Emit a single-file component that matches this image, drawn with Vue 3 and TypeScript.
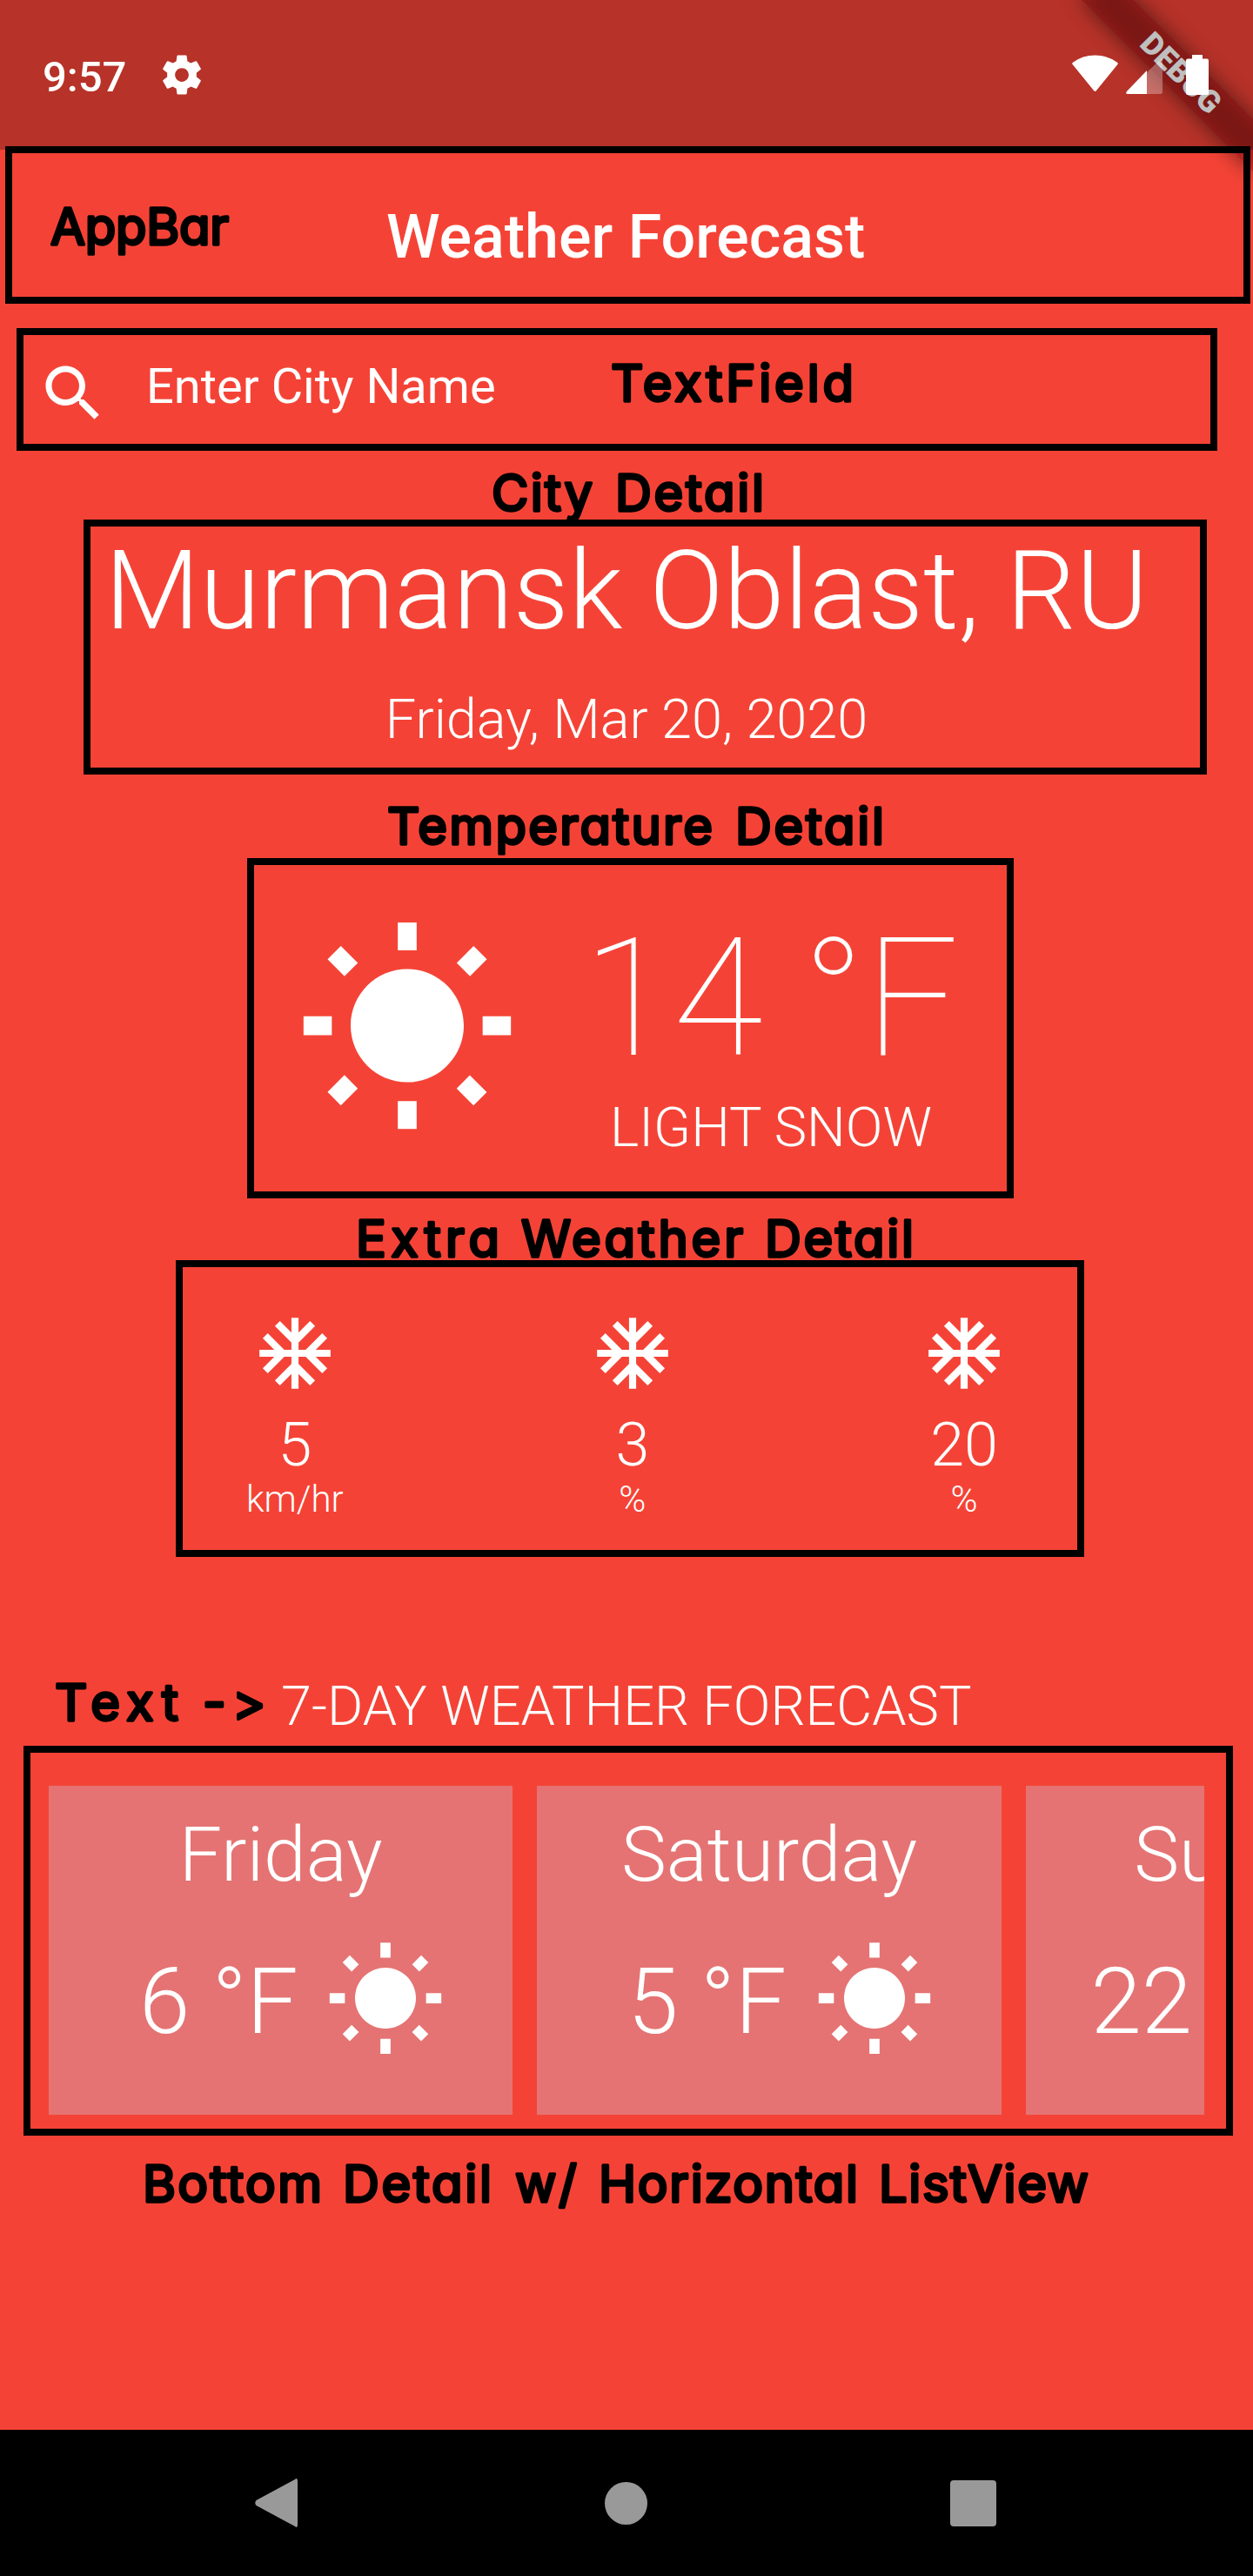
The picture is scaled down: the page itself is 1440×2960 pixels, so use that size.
<script setup lang="ts">
import { h } from 'vue'

interface Word {
  text: string
  x: number
  w: number
}
interface Reading {
  value: string
  unit: string
}
interface Day {
  name: string
  temp: string
}

const BASELINE = 46

// Hand-lettered label: every word is fitted to its own span.
const Note = (props: { words: Word[]; width: number; height: number }) =>
  h(
    'svg',
    { class: 'note', width: props.width, height: props.height },
    props.words.map((word) =>
      h('text', { x: word.x, y: BASELINE, textLength: word.w, lengthAdjust: 'spacing' }, word.text),
    ),
  )
Note.props = ['words', 'width', 'height']

const appBarNote: Word[] = [{ text: 'AppBar', x: 44, w: 205 }]
const fieldNote: Word[] = [{ text: 'TextField', x: 121, w: 279 }]
const cityNote: Word[] = [
  { text: 'City', x: 565, w: 116 },
  { text: 'Detail', x: 707, w: 171 },
]
const temperatureNote: Word[] = [
  { text: 'Temperature', x: 445, w: 374 },
  { text: 'Detail', x: 845, w: 171 },
]
const extraNote: Word[] = [
  { text: 'Extra', x: 409, w: 165 },
  { text: 'Weather', x: 599, w: 255 },
  { text: 'Detail', x: 879, w: 171 },
]
const textNote: Word[] = [
  { text: 'Text', x: 63, w: 142 },
  { text: '-', x: 233, w: 29 },
  { text: '>', x: 267, w: 36 },
]
const bottomNote: Word[] = [
  { text: 'Bottom', x: 164, w: 206 },
  { text: 'Detail', x: 394, w: 171 },
  { text: 'w/', x: 592, w: 71 },
  { text: 'Horizontal', x: 688, w: 298 },
  { text: 'ListView', x: 1010, w: 241 },
]

const readings: Reading[] = [
  { value: '5', unit: 'km/hr' },
  { value: '3', unit: '%' },
  { value: '20', unit: '%' },
]
const days: Day[] = [
  { name: 'Friday', temp: '6 °F' },
  { name: 'Saturday', temp: '5 °F' },
  { name: 'Sunday', temp: '22 °F' },
]

const sunPath =
  'M6.76 4.84l-1.8-1.79-1.41 1.41 1.79 1.79 1.42-1.41zM4 10.5H1v2h3v-2zm9-9.95h-2V3.5h2V.55zm7.45 3.91l-1.41-1.41-1.79 1.79 1.41 1.41 1.79-1.79zm-3.21 13.7l1.79 1.8 1.41-1.41-1.8-1.79-1.4 1.4zM20 10.5v2h3v-2h-3zm-8-5c-3.31 0-6 2.69-6 6s2.69 6 6 6 6-2.69 6-6-2.69-6-6-6zm-1 16.95h2V19.5h-2v2.95zm-7.45-3.91l1.41 1.41 1.79-1.8-1.41-1.41-1.79 1.8z'
const snowPath =
  'M22 11h-4.17l3.24-3.24-1.41-1.42L15 11h-2V9l4.66-4.66-1.42-1.41L13 6.17V2h-2v4.17L7.76 2.93 6.34 4.34 11 9v2H9L4.34 6.34 2.93 7.76 6.17 11H2v2h4.17l-3.24 3.24 1.41 1.42L9 13h2v2l-4.66 4.66 1.42 1.41L11 17.83V22h2v-4.17l3.24 3.24 1.42-1.41L13 15v-2h2l4.66 4.66 1.41-1.42L17.83 13H22z'
</script>

<template>
  <div class="phone">
    <div class="banner-clip">
      <div class="banner-shadow"></div>
      <div class="banner">DEBUG</div>
    </div>

    <header class="status">
      <span class="time">9:57</span>
      <svg class="gear" viewBox="0 0 24 24">
        <path
          d="M19.43 12.98c.04-.32.07-.64.07-.98s-.03-.66-.07-.98l2.11-1.65c.19-.15.24-.42.12-.64l-2-3.46c-.12-.22-.39-.3-.61-.22l-2.49 1c-.52-.4-1.08-.73-1.69-.98l-.38-2.65C14.46 2.18 14.25 2 14 2h-4c-.25 0-.46.18-.49.42l-.38 2.65c-.61.25-1.17.59-1.69.98l-2.49-1c-.23-.09-.49 0-.61.22l-2 3.46c-.13.22-.07.49.12.64l2.11 1.65c-.04.32-.07.65-.07.98s.03.66.07.98l-2.11 1.65c-.19.15-.24.42-.12.64l2 3.46c.12.22.39.3.61.22l2.49-1c.52.4 1.08.73 1.69.98l.38 2.65c.03.24.24.42.49.42h4c.25 0 .46-.18.49-.42l.38-2.65c.61-.25 1.17-.59 1.69-.98l2.49 1c.23.09.49 0 .61-.22l2-3.46c.12-.22.07-.49-.12-.64l-2.11-1.65zM12 15.5c-1.93 0-3.5-1.57-3.5-3.5s1.57-3.5 3.5-3.5 3.5 1.57 3.5 3.5-1.57 3.5-3.5 3.5z"
        />
      </svg>
      <svg class="signals" viewBox="0 0 160 48">
        <path d="M1 11.5Q-.5 10 1 8.8Q12 .5 26.5 .5T52 8.8Q53.5 10 52 11.5L28 41Q26.5 43 25 41Z" />
        <path d="M102 5Q104 3 104 6V43Q104 45 102 45H64Q61 45 63 42Z" opacity=".3" />
        <path d="M86 18V45H64Q61 45 63 42Z" />
        <path d="M138 0H150V4.5H155Q157 4.5 157 6.5V44Q157 46 155 46H133Q131 46 131 44V6.5Q131 4.5 133 4.5H138Z" />
      </svg>
    </header>

    <main class="content">
      <section class="box app-bar">
        <Note class="bar-note" :words="appBarNote" :width="430" :height="60" />
        <h1 class="title">Weather Forecast</h1>
      </section>

      <section class="box search">
        <svg class="search-icon" viewBox="0 0 24 24">
          <path
            d="M15.5 14h-.79l-.28-.27C15.41 12.59 16 11.11 16 9.5 16 5.91 13.09 3 9.5 3S3 5.91 3 9.5 5.91 16 9.5 16c1.61 0 3.09-.59 4.23-1.57l.27.28v.79l5 4.99L20.49 19l-4.99-5zm-6 0C7.01 14 5 11.99 5 9.5S7.01 5 9.5 5 14 7.01 14 9.5 11.99 14 9.5 14z"
          />
        </svg>
        <span class="hint">Enter City Name</span>
        <Note class="field-note" :words="fieldNote" :width="420" :height="60" />
      </section>

      <Note class="city-note" :words="cityNote" :width="1440" :height="56" />
      <section class="box city">
        <div class="city-name">Murmansk Oblast, RU</div>
        <div class="date">Friday, Mar 20, 2020</div>
      </section>

      <Note class="temperature-note" :words="temperatureNote" :width="1440" :height="62" />
      <section class="box temperature">
        <svg class="sun-large" viewBox="0 0 24 24"><path :d="sunPath" /></svg>
        <div class="temperature-text">
          <div class="degrees">14 °F</div>
          <div class="condition">LIGHT SNOW</div>
        </div>
      </section>

      <Note class="extra-note" :words="extraNote" :width="1440" :height="50" />
      <section class="box extra">
        <div v-for="(reading, i) in readings" :key="i" class="reading">
          <svg class="snow" viewBox="0 0 24 24"><path :d="snowPath" /></svg>
          <div class="value">{{ reading.value }}</div>
          <div class="unit">{{ reading.unit }}</div>
        </div>
      </section>

      <div class="heading">
        <Note class="heading-note" :words="textNote" :width="323" :height="60" />
        <h2 class="heading-text">7-DAY WEATHER FORECAST</h2>
      </div>
      <section class="box list">
        <div class="viewport">
          <article v-for="day in days" :key="day.name" class="card">
            <div class="day">{{ day.name }}</div>
            <div class="card-row">
              <span class="card-temp">{{ day.temp }}</span>
              <svg class="sun-small" viewBox="0 0 24 24"><path :d="sunPath" /></svg>
            </div>
          </article>
        </div>
      </section>
      <Note class="bottom-note" :words="bottomNote" :width="1440" :height="60" />
    </main>

    <nav class="nav">
      <svg class="back" viewBox="0 0 50 56">
        <path d="M46 1Q49 -1.5 49 3V53Q49 57.5 46 55L1.5 31Q-1 28 1.5 25Z" />
      </svg>
      <span class="home"></span>
      <span class="recent"></span>
    </nav>
  </div>
</template>

<style>
body {
  margin: 0;
}

.note {
  display: block;
  flex: none;
  overflow: visible;
  font-family: 'Comic Sans MS', Inter, sans-serif;
  font-size: 58px;
  font-weight: 400;
  font-feature-settings: 'cv11', 'ss03';
  fill: #000;
  stroke: #000;
  stroke-width: 3.4px;
  stroke-linejoin: round;
}
</style>

<style scoped>
.phone {
  position: relative;
  display: flex;
  flex-direction: column;
  width: 1440px;
  height: 2960px;
  overflow: hidden;
  background: #f44336;
  color: #fff;
  font-family: Roboto, sans-serif;
}

svg {
  display: block;
  flex: none;
}

.gear,
.signals,
.search-icon,
.sun-large,
.sun-small,
.snow {
  fill: #fff;
}

.banner-clip {
  position: absolute;
  top: 0;
  right: 0;
  width: 300px;
  height: 300px;
  overflow: hidden;
}

.banner,
.banner-shadow {
  position: absolute;
  top: 62.5px;
  left: 76.5px;
  width: 280px;
  height: 42px;
  transform: rotate(45deg);
}

.banner-shadow {
  background: rgba(0, 0, 0, 0.5);
  filter: blur(12px);
}

.banner {
  background: rgba(183, 28, 28, 0.63);
  font-size: 35.7px;
  font-weight: 900;
  line-height: 42px;
  text-align: center;
}

.status {
  position: relative;
  display: flex;
  align-items: flex-start;
  box-sizing: border-box;
  height: 172px;
  padding: 59px 51px 0 49px;
  background: rgba(0, 0, 0, 0.25);
}

.time {
  width: 133px;
  margin-top: 5px;
  font-size: 49px;
  font-weight: 500;
  line-height: 49px;
}

.gear {
  width: 54px;
  height: 54px;
}

.signals {
  width: 160px;
  height: 48px;
  margin: 4px -3px 0 auto;
}

.content {
  position: relative;
}

.box {
  box-sizing: border-box;
  border: 8px solid #000;
}

.app-bar {
  display: flex;
  align-items: flex-start;
  width: 1431px;
  height: 181px;
  margin: -4px 0 0 6px;
}

.bar-note {
  margin-top: 59px;
}

.title {
  margin: 61px 0 0;
  font-size: 70px;
  font-weight: 500;
  line-height: 70px;
  white-space: nowrap;
}

.search {
  display: flex;
  align-items: flex-start;
  width: 1380px;
  height: 141px;
  margin: 28px 0 0 19px;
  padding: 25px 0 0 15px;
}

.search-icon {
  width: 84px;
  height: 84px;
}

.hint {
  width: 413px;
  margin: 6px 0 0 42px;
  font-size: 56px;
  line-height: 56px;
  white-space: nowrap;
}

.field-note {
  margin-top: 5px;
}

.city-note {
  margin-top: 23px;
}

.city {
  width: 1291px;
  height: 293px;
  margin-left: 96px;
  padding: 11px 43px 0 0;
  font-weight: 300;
  text-align: center;
  white-space: nowrap;
}

.city-name {
  font-size: 126px;
  line-height: 126px;
}

.date {
  margin-top: 53px;
  font-size: 63px;
  line-height: 63px;
}

.temperature-note {
  margin-top: 34px;
}

.temperature {
  display: flex;
  align-items: flex-start;
  width: 881px;
  height: 391px;
  margin-left: 284px;
  padding: 59px 0 0 46px;
}

.sun-large {
  width: 260px;
  height: 260px;
  margin-top: 1px;
}

.temperature-text {
  width: 576px;
  margin-right: -17px;
  flex: none;
  text-align: center;
}

.degrees {
  font-size: 189px;
  font-weight: 100;
  line-height: 189px;
}

.condition {
  margin-top: 22px;
  font-size: 63px;
  font-weight: 300;
  line-height: 63px;
}

.extra-note {
  margin-top: 21px;
}

.extra {
  display: flex;
  justify-content: space-between;
  width: 1044px;
  height: 341px;
  margin-left: 202px;
  padding: 50px 81px 0 73px;
  font-weight: 300;
}

.reading {
  display: flex;
  flex-direction: column;
  align-items: center;
}

.snow {
  width: 98px;
  height: 98px;
}

.value {
  margin-top: 21px;
  font-size: 70px;
  line-height: 70px;
}

.unit {
  margin-top: 7px;
  font-size: 42px;
  line-height: 42px;
}

.heading {
  display: flex;
  align-items: flex-start;
  height: 77px;
  margin-top: 140px;
}

.heading-note {
  margin-top: 2px;
}

.heading-text {
  margin: 0;
  font-size: 63px;
  font-weight: 300;
  line-height: 63px;
  white-space: nowrap;
}

.list {
  width: 1390px;
  height: 448px;
  margin-left: 27px;
  padding: 38px 25px 0 21px;
}

.viewport {
  display: flex;
  gap: 28px;
  overflow: hidden;
}

.card {
  flex: none;
  box-sizing: border-box;
  width: 533.4px;
  height: 378px;
  padding-top: 35px;
  background: #e57373;
  font-weight: 300;
  text-align: center;
}

.day {
  font-size: 87.5px;
  line-height: 88px;
}

.card-row {
  display: flex;
  justify-content: center;
  align-items: flex-start;
  gap: 31px;
  margin-top: 54px;
  padding-left: 28px;
}

.card-temp {
  margin-top: 19px;
  font-size: 105px;
  line-height: 105px;
}

.sun-small {
  width: 140px;
  height: 140px;
}

.bottom-note {
  margin-top: 30px;
}

.nav {
  position: relative;
  display: flex;
  align-items: center;
  box-sizing: border-box;
  height: 168px;
  margin-top: auto;
  padding-left: 293px;
  background: #000;
}

.back {
  width: 50px;
  height: 56px;
  fill: #999;
}

.home {
  width: 49px;
  height: 49px;
  margin-left: 352px;
  border-radius: 50%;
  background: #999;
}

.recent {
  width: 52.5px;
  height: 53px;
  margin-left: 348px;
  border-radius: 4px;
  background: #999;
}
</style>
